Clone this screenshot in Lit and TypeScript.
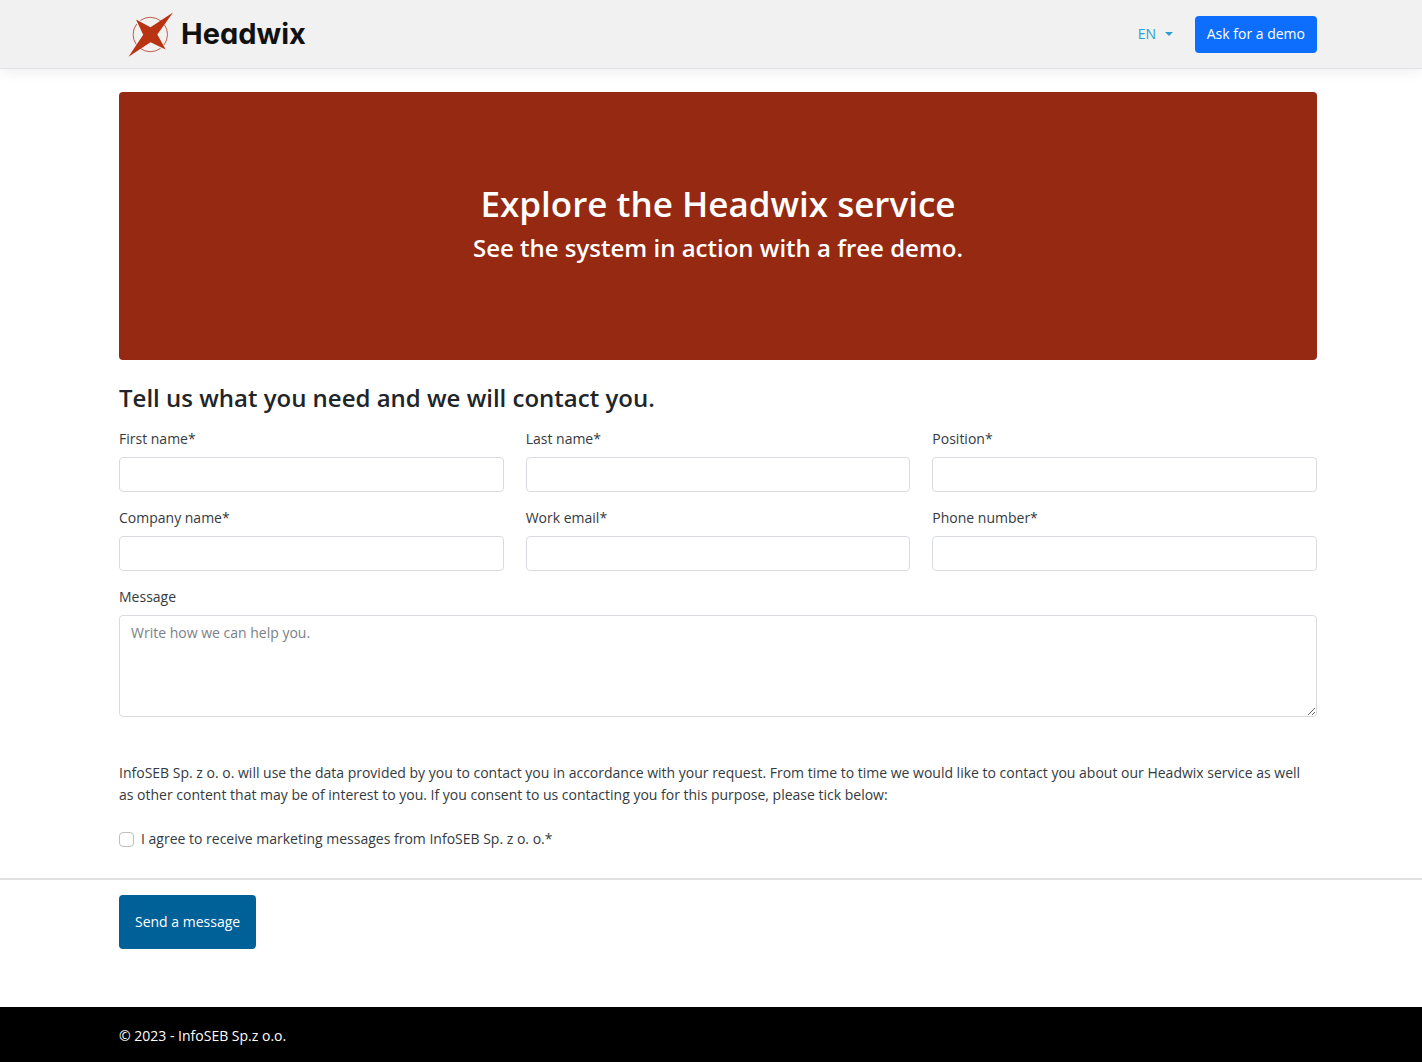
import { LitElement, html, css } from "lit";
import { customElement } from "lit/decorators.js";

interface Field {
  id: string;
  label: string;
  type: string;
}

const FIELDS: Field[] = [
  { id: "first-name", label: "First name*", type: "text" },
  { id: "last-name", label: "Last name*", type: "text" },
  { id: "position", label: "Position*", type: "text" },
  { id: "company", label: "Company name*", type: "text" },
  { id: "email", label: "Work email*", type: "email" },
  { id: "phone", label: "Phone number*", type: "tel" },
];

@customElement("app-root")
export class AppRoot extends LitElement {
  static styles = css`
    :host {
      display: flex;
      flex-direction: column;
      min-height: 100vh;
      background: #fff;
      color: #343a40;
      font-family: "Open Sans", "Noto Sans", sans-serif;
      font-size: 14px;
      line-height: 22px;
    }
    *,
    *::before,
    *::after {
      box-sizing: border-box;
    }
    input,
    textarea,
    button,
    select {
      font: inherit;
      margin: 0;
    }
    .shell {
      padding-left: 14px;
    }
    .container {
      max-width: 1198px;
      margin: 0 auto;
    }
    .header {
      background: #f1f1f1;
      border-bottom: 1px solid #dee2e6;
      box-shadow: 0 4px 11px rgba(0, 0, 0, 0.06);
    }
    .bar {
      display: flex;
      align-items: center;
      justify-content: space-between;
      height: 68px;
    }
    .brand {
      display: flex;
      align-items: center;
      gap: 7px;
      padding-left: 8px;
      color: #111;
      text-decoration: none;
      font-family: Inter, sans-serif;
      font-feature-settings: "cv11";
      font-weight: 700;
      font-size: 29px;
      line-height: 36px;
    }
    .mark {
      display: block;
      width: 47px;
      height: 47px;
    }
    .tools {
      display: flex;
      align-items: center;
      gap: 22px;
    }
    .lang {
      display: flex;
      align-items: center;
      gap: 8px;
      color: #2a9fd0;
    }
    .lang-select {
      appearance: none;
      border: 0;
      padding: 0;
      background: transparent;
      color: inherit;
    }
    .caret {
      display: block;
      width: 8px;
      height: 4px;
    }
    .demo {
      border: 0;
      border-radius: 4px;
      padding: 7px 12px 8px;
      background: #0d6efd;
      color: #fff;
    }
    .banner {
      display: flex;
      flex-direction: column;
      justify-content: center;
      align-items: center;
      margin-top: 23px;
      padding: 88px 16px 92px;
      border-radius: 4px;
      background: #962911;
      color: #fff;
      text-align: center;
    }
    .title,
    .subtitle,
    .form-title {
      margin: 0;
      font-weight: 600;
    }
    .title {
      font-size: 35px;
      line-height: 48px;
    }
    .subtitle {
      font-size: 24px;
      line-height: 40px;
    }
    .form-title {
      margin: 21px 0 13px;
      color: #212529;
      font-size: 24px;
      line-height: 34px;
    }
    .fields {
      display: grid;
      grid-template-columns: repeat(3, 1fr);
      gap: 15px 22px;
      margin-bottom: 15px;
    }
    .field {
      display: flex;
      flex-direction: column;
      gap: 7px;
    }
    .control {
      width: 100%;
      height: 35px;
      border: 1px solid #d8dce0;
      border-radius: 4px;
      padding: 6px 11px;
      background: #fff;
      color: #212529;
    }
    .message {
      display: block;
      height: 102px;
      resize: vertical;
    }
    .message::placeholder {
      color: #7b8187;
      opacity: 1;
    }
    .consent {
      margin: 45px 0 22px;
    }
    .agree {
      display: flex;
      align-items: center;
      gap: 7px;
    }
    .tick {
      appearance: none;
      width: 15px;
      height: 15px;
      border: 1px solid #bfbfbf;
      border-radius: 4px;
      background: #fff;
    }
    .tick:checked {
      background: #0d6efd;
      border-color: #0d6efd;
    }
    .rule {
      height: 2px;
      margin: 28px 0 15px;
      border: 0;
      background: #dfe0e2;
    }
    .send {
      display: block;
      border: 0;
      border-radius: 4px;
      padding: 16px;
      background: #006098;
      color: #fff;
    }
    .footer {
      margin-top: auto;
      padding-top: 18px;
      padding-bottom: 15px;
      background: #000;
      color: #fff;
    }
  `;

  render() {
    return html`
      <header class="header shell">
        <div class="container bar">
          <a class="brand" href="#">
            <svg class="mark" viewBox="0 0 47 47" aria-hidden="true">
              <circle
                cx="23.3"
                cy="23.5"
                r="17.2"
                fill="none"
                stroke="#b84a38"
                stroke-width="0.9"
                stroke-dasharray="22 5.02"
                stroke-dashoffset="11"
              />
              <path
                fill="#b93212"
                d="M46 1.500L30.300 23.500L38.700 38.500L23.500 31.300L1.500 45.800L16.200 23.800L9 8.500L23.500 16.200Z"
              />
            </svg>
            <span>Headwix</span>
          </a>
          <div class="tools">
            <label class="lang">
              <select class="lang-select" aria-label="Language">
                <option>EN</option>
              </select>
              <svg class="caret" viewBox="0 0 8 4" aria-hidden="true">
                <path fill="currentColor" d="M0 0H8L4 4Z" />
              </svg>
            </label>
            <button class="demo" type="button">Ask for a demo</button>
          </div>
        </div>
      </header>
      <main>
        <div class="shell">
          <section class="container">
            <div class="banner">
              <h1 class="title">Explore the Headwix service</h1>
              <h2 class="subtitle">See the system in action with a free demo.</h2>
            </div>
          </section>
        </div>
        <form @submit=${(e: Event) => e.preventDefault()}>
          <div class="shell">
            <div class="container">
              <h2 class="form-title">Tell us what you need and we will contact you.</h2>
              <div class="fields">
                ${FIELDS.map(
                  (f) => html`
                    <div class="field">
                      <label for=${f.id}>${f.label}</label>
                      <input class="control" id=${f.id} name=${f.id} type=${f.type} />
                    </div>
                  `
                )}
              </div>
              <div class="field">
                <label for="message">Message</label>
                <textarea
                  class="control message"
                  id="message"
                  name="message"
                  placeholder="Write how we can help you."
                ></textarea>
              </div>
              <p class="consent">
                InfoSEB Sp. z o. o. will use the data provided by you to contact you in accordance with your request.
                From time to time we would like to contact you about our Headwix service as well as other content that
                may be of interest to you. If you consent to us contacting you for this purpose, please tick below:
              </p>
              <div class="agree">
                <input class="tick" id="agree" name="agree" type="checkbox" />
                <label for="agree">I agree to receive marketing messages from InfoSEB Sp. z o. o.*</label>
              </div>
            </div>
          </div>
          <hr class="rule" />
          <div class="shell">
            <div class="container">
              <button class="send" type="submit">Send a message</button>
            </div>
          </div>
        </form>
      </main>
      <footer class="footer shell">
        <div class="container">© 2023 - InfoSEB Sp.z o.o.</div>
      </footer>
    `;
  }
}
